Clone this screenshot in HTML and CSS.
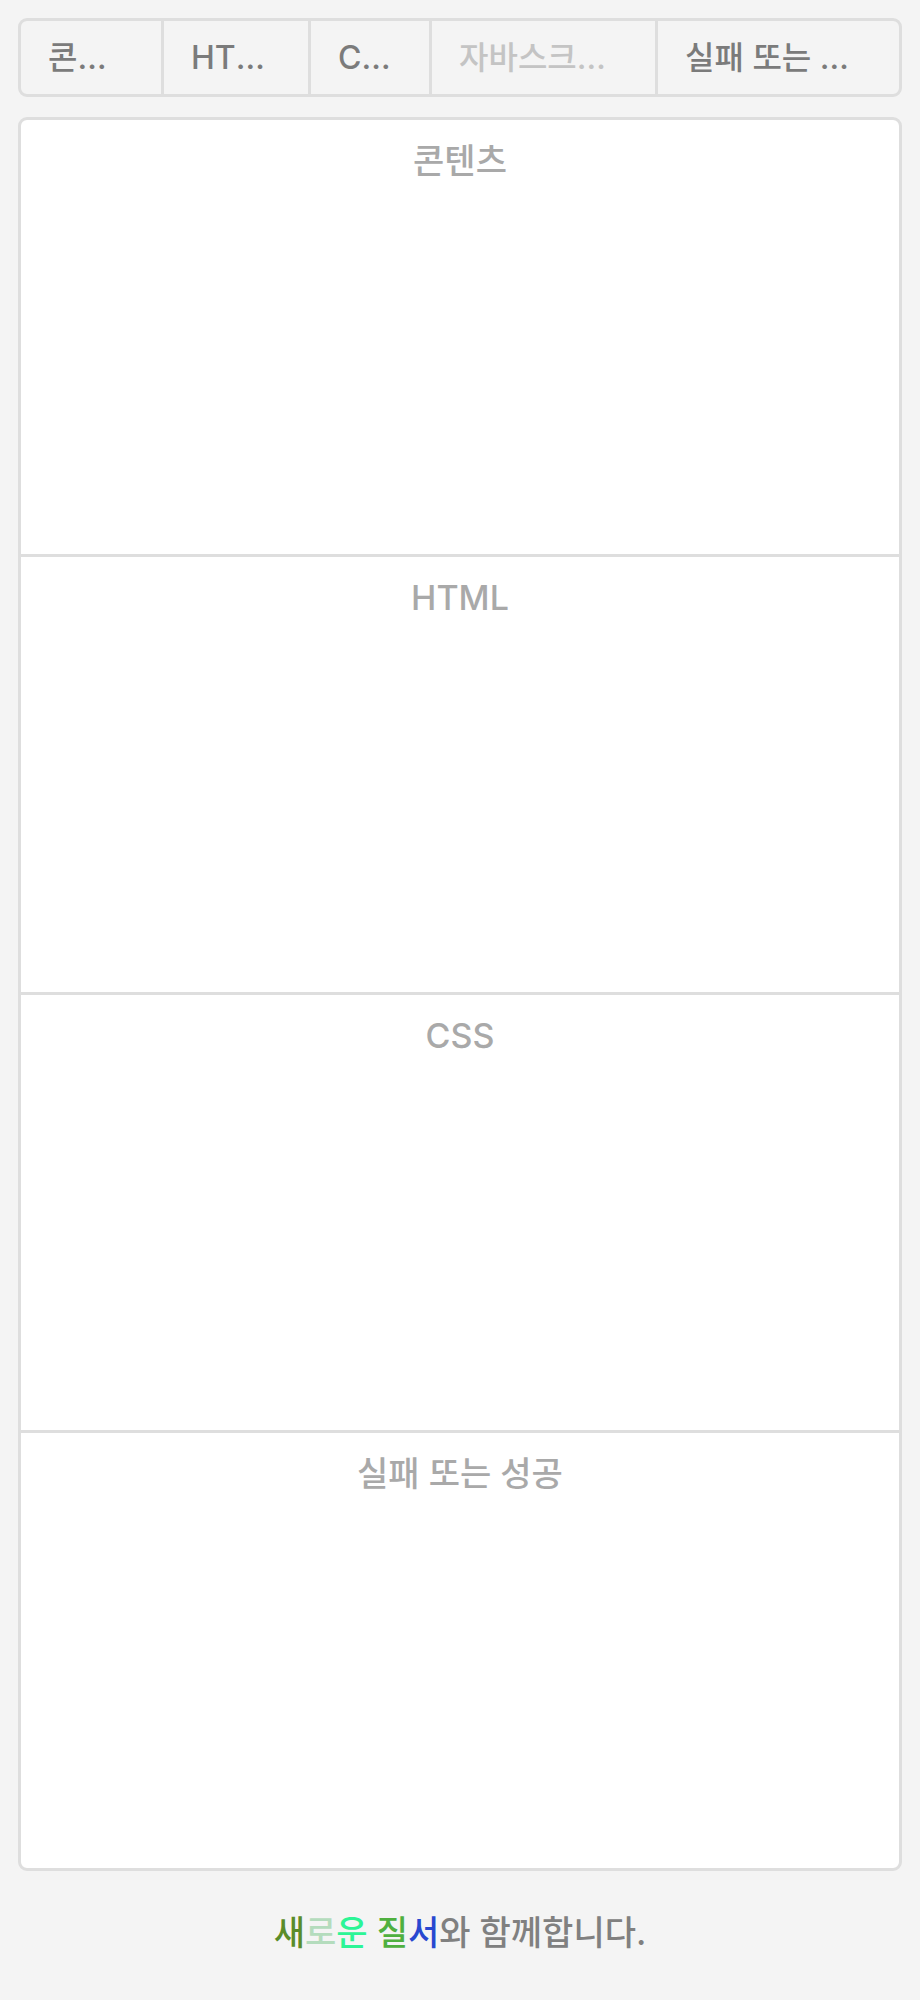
FILE: index.html
```html
<!DOCTYPE html>
<html lang="ko">
<head>
<meta charset="utf-8">
<title>새로운 질서</title>
<link rel="stylesheet" href="styles.css">
</head>
<body>
<div class="page">
  <nav class="tabs">
    <div class="tab">콘텐츠</div>
    <div class="tab">HTML</div>
    <div class="tab">CSS</div>
    <div class="tab tab-active">자바스크립트</div>
    <div class="tab">실패 또는 성공</div>
  </nav>
  <main class="panel">
    <section class="section"><h2 class="section-title">콘텐츠</h2></section>
    <section class="section"><h2 class="section-title">HTML</h2></section>
    <section class="section"><h2 class="section-title">CSS</h2></section>
    <section class="section"><h2 class="section-title">실패 또는 성공</h2></section>
  </main>
  <footer class="footer">
    <span class="c1">새</span><span class="c2">로</span><span class="c3">운</span> <span class="c4">질</span><span class="c5">서</span>와 함께합니다.
  </footer>
</div>
</body>
</html>
```

FILE: styles.css
```css
* { box-sizing: border-box; }
html, body {
  margin: 0;
  padding: 0;
  background: #f4f4f4;
}
body {
  font-family: Inter, "Noto Sans CJK KR Medium", "Noto Sans CJK KR", "Noto Sans", sans-serif;
  font-weight: 500;
  font-size: 32px;
}
.page {
  padding: 18px 18px 0;
}
.tabs {
  display: grid;
  grid-template-columns: 140px 147px 121px 226px 1fr;
  height: 79px;
  border: 3px solid #dedede;
  border-radius: 9px;
  background: #f4f4f4;
  overflow: hidden;
}
.tab {
  display: block;
  padding: 0 34px 0 27px;
  line-height: 73px;
  color: #7b7b7b;
  white-space: nowrap;
  overflow: hidden;
  text-overflow: ellipsis;
  min-width: 0;
}
.tab + .tab {
  border-left: 3px solid #dedede;
}
.tab-active {
  color: #c4c4c4;
}
.panel {
  margin-top: 20px;
  background: #ffffff;
  border: 3px solid #dedede;
  border-radius: 9px;
  overflow: hidden;
}
.section {
  height: 434px;
  padding-top: 17px;
}
.section + .section {
  height: 438px;
  border-top: 3px solid #dedede;
}
.section-title {
  margin: 0;
  font-size: 34px;
  font-weight: 500;
  line-height: 48px;
  text-align: center;
  color: #a9a9a9;
}
.footer {
  margin-top: 38px;
  text-align: center;
  font-size: 34px;
  line-height: 48px;
  color: #808080;
}
.c1 { color: #5a8c2a; }
.c2 { color: #b4dcbd; }
.c3 { color: #2cf596; }
.c4 { color: #4fb03f; }
.c5 { color: #2848d0; }
```
